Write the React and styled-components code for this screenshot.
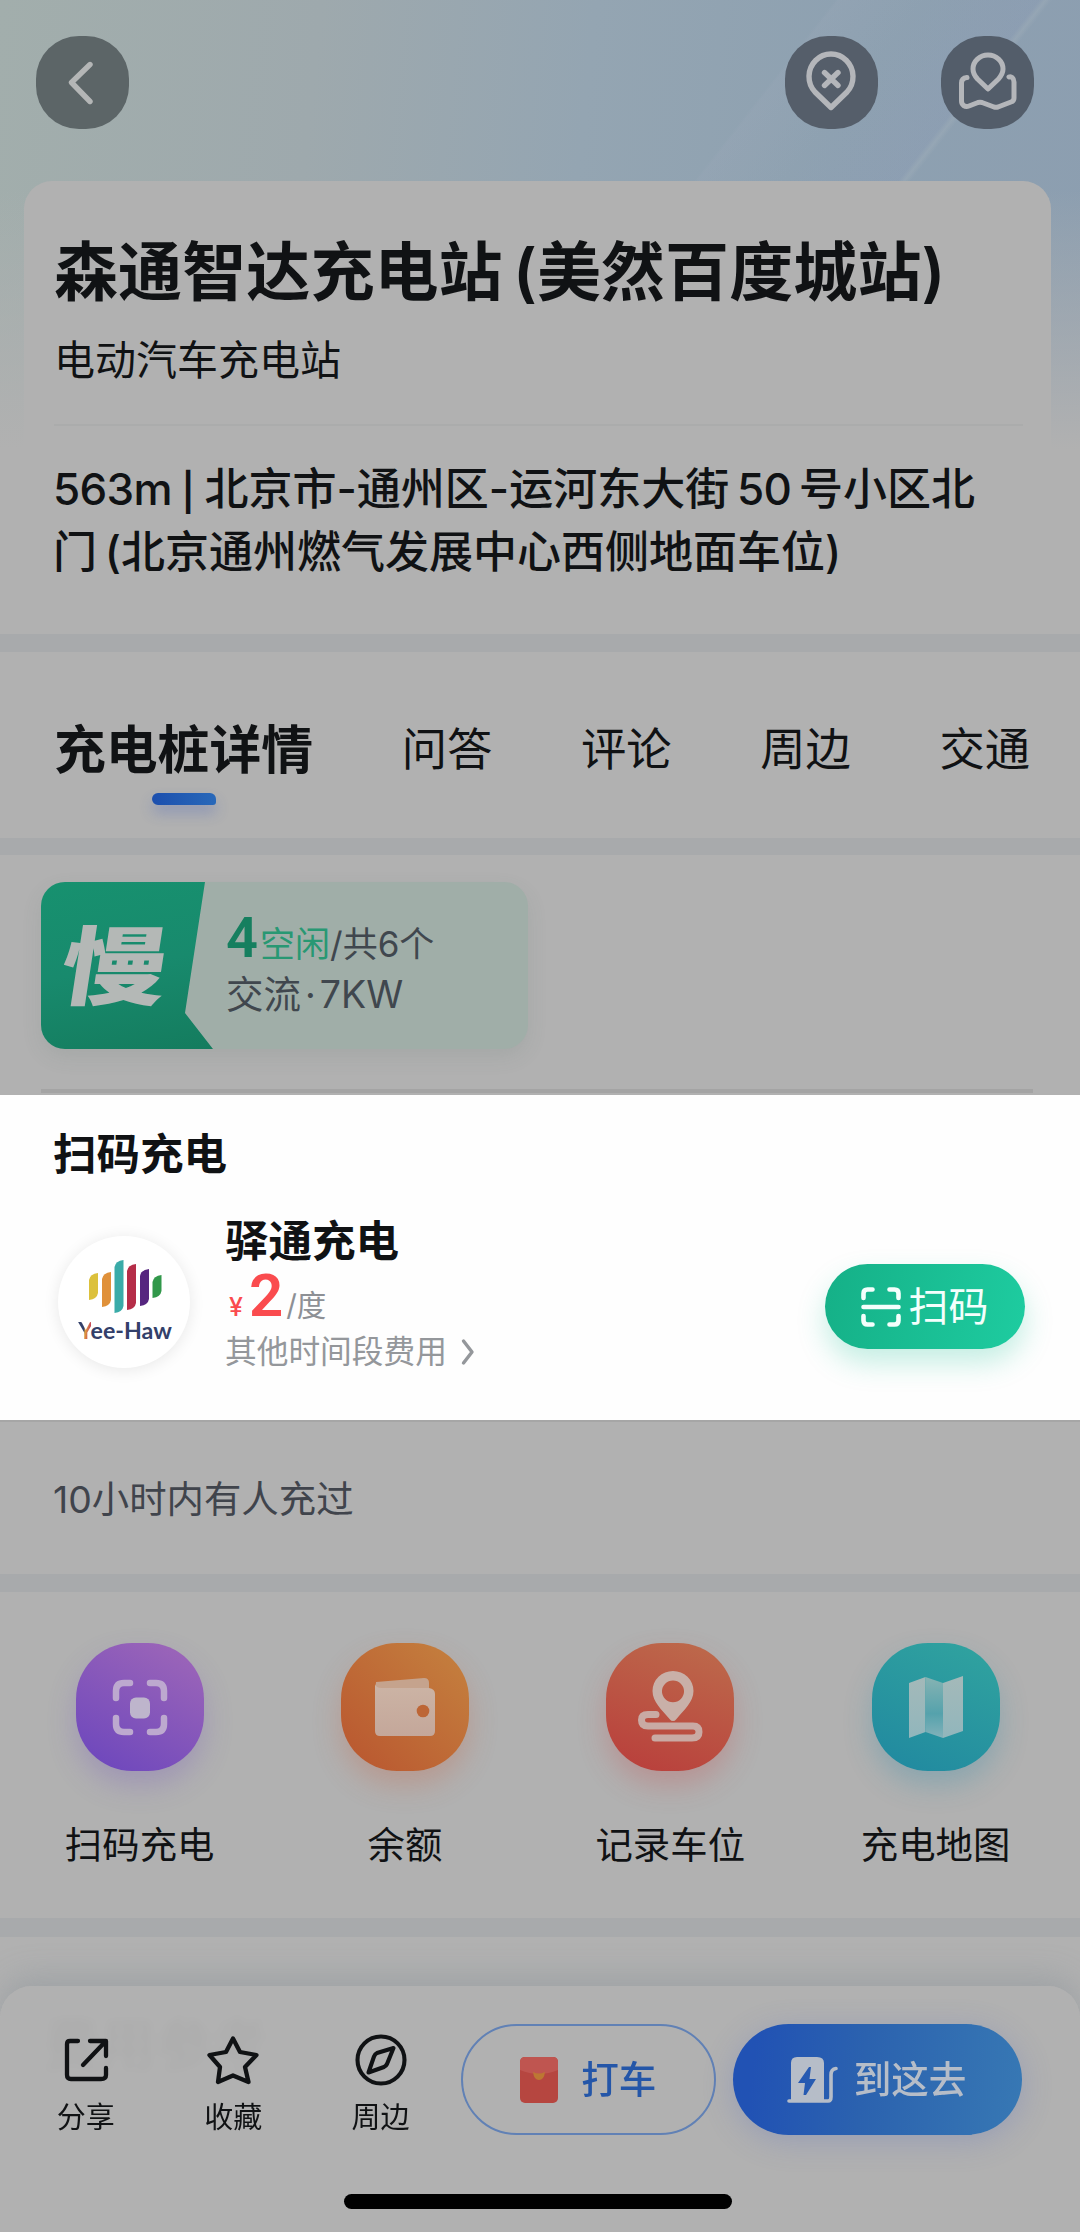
import React from "react";
import styled, { createGlobalStyle } from "styled-components";

const GlobalStyle = createGlobalStyle`
  * { box-sizing: border-box; }
  body {
    margin: 0;
    background: #b1b1b1;
    color: #101214;
    font-family: Inter, "Noto Sans CJK SC", sans-serif;
  }
  svg { display: block; flex: none; }
`;

const Screen = styled.main`
  position: relative;
  width: 1080px;
  height: 2232px;
  overflow: hidden;
  background: #b1b1b1;
`;

const Hero = styled.header`
  height: 634px;
  background:
    linear-gradient(180deg, rgba(177, 177, 177, 0) 0, rgba(177, 177, 177, 0) 190px, #b1b1b1 450px),
    linear-gradient(128deg, transparent 658px, rgba(155, 168, 184, 0.28) 661px, transparent 730px, rgba(138, 150, 188, 0.14) 819px, rgba(165, 178, 188, 0.35) 824px, transparent 829px),
    linear-gradient(96deg, #a2aeac 0%, #9ea9ad 28%, #94a5b2 52%, #8ea1b1 74%, #8c9eb0 100%);
`;

const NavBar = styled.nav`
  display: flex;
  align-items: flex-start;
  height: 181px;
  padding: 36px 46px 0 36px;
`;

const NavButton = styled.button`
  display: grid;
  place-items: center;
  width: 93px;
  height: 93px;
  margin-left: ${(p) => p.$push || "0"};
  padding: 0;
  border: 0;
  border-radius: 43px;
  background: ${(p) => p.$tone};
`;

const StationCard = styled.section`
  margin: 0 29px 0 24px;
  padding: 51px 28px 0 30px;
  border-radius: 28px 28px 0 0;
  background: #b1b1b1;
`;

const StationName = styled.h1`
  margin: 0;
  font-size: 64px;
  font-weight: 600;
  line-height: 80px;
  letter-spacing: 0.1px;
  word-spacing: -6px;
  white-space: nowrap;
`;

const StationType = styled.p`
  margin: 23px 0 39px;
  font-size: 41px;
  line-height: 50px;
`;

const HeroRule = styled.hr`
  height: 2px;
  margin: 0;
  border: 0;
  background: #abacac;
`;

const Address = styled.p`
  margin: 33px 0 0 -1px;
  font-size: 44px;
  font-weight: 500;
  line-height: 61px;
  word-spacing: -4px;
  white-space: nowrap;
`;

const AddressNumber = styled.span`
  font-weight: 550;
  letter-spacing: -0.7px;
`;

const AddressDivider = styled.span`
  margin: 0 2px;
  font-size: 37px;
  font-weight: 600;
`;

const Band = styled.div`
  height: ${(p) => p.$h || 18}px;
  background: #a8aaac;
`;

const Tabs = styled.nav`
  display: flex;
  align-items: flex-start;
  justify-content: space-between;
  height: 186px;
  padding: 67px 50px 0 54px;
`;

const Tab = styled.a`
  display: flex;
  flex-direction: column;
  align-items: center;
  font-size: ${(p) => (p.$active ? 51.8 : 45.3)}px;
  font-weight: ${(p) => (p.$active ? 600 : 400)};
  line-height: 62px;
  &::after {
    content: "";
    display: ${(p) => (p.$active ? "block" : "none")};
    width: 64px;
    height: 12px;
    margin-top: 12px;
    border-radius: 6px 6px 3px 6px;
    background: linear-gradient(90deg, #1c4fae, #2868b9);
    box-shadow: 0 8px 14px rgba(60, 90, 190, 0.3);
  }
`;

const PileSection = styled.section`
  display: flex;
  flex-direction: column;
  height: 240px;
  padding: 27px 47px 0 41px;
`;

const PileCard = styled.div`
  display: flex;
  width: 487px;
  height: 167px;
  border-radius: 24px;
  background: #a0aea8;
  box-shadow: 0 8px 20px rgba(80, 110, 100, 0.12);
`;

const SpeedBadge = styled.div`
  display: grid;
  place-items: center;
  width: 172px;
  height: 167px;
  padding-right: 22px;
  border-radius: 24px 0 0 24px;
  background: linear-gradient(170deg, #17916f 0%, #188a6d 50%, #147c5e 100%);
  clip-path: polygon(0 0, 164px 0, 144px 131px, 172px 100%, 0 100%);
`;

const SpeedText = styled.span`
  color: #b4b8b6;
  font-family: "Noto Sans CJK SC", sans-serif;
  font-size: 92px;
  font-weight: 900;
  line-height: 92px;
  transform: translateY(-5px) scale(1.15, 0.93) skewX(-7deg);
`;

const PileInfo = styled.div`
  display: flex;
  flex-direction: column;
  padding: 28px 0 0 13px;
  color: #40474e;
  white-space: nowrap;
`;

const PileCount = styled.div`
  height: 60px;
  font-size: 35px;
  line-height: 56px;
`;

const FreeNumber = styled.span`
  margin-right: 2px;
  color: #167f5f;
  font-family: Roboto, sans-serif;
  font-size: 56px;
  font-weight: 600;
  line-height: 56px;
`;

const FreeLabel = styled.span`
  color: #289873;
`;

const PileSpec = styled.div`
  font-size: 37.5px;
  line-height: 50px;
`;

const SpecDot = styled.span`
  margin: 0 4px;
`;

const PileRule = styled.hr`
  width: 992px;
  height: 4px;
  margin: 40px 0 0;
  border: 0;
  background: #a4a4a4;
`;

const ScanSection = styled.section`
  height: 325px;
  padding: 28px 55px 0 55px;
  background: #fefefe;
`;

const ScanTitle = styled.h2`
  margin: 0 0 0 -2px;
  font-size: 43.5px;
  font-weight: 600;
  line-height: 62px;
`;

const Provider = styled.div`
  display: flex;
  align-items: flex-start;
  padding-top: 28px;
`;

const ProviderLogo = styled.div`
  display: flex;
  flex-direction: column;
  align-items: center;
  width: 132px;
  height: 132px;
  margin: 23px 35px 0 3px;
  padding: 24px 0 0 2px;
  border-radius: 50%;
  background: #fff;
  box-shadow: 0 2px 16px rgba(0, 0, 0, 0.09);
`;

const LogoWord = styled.span`
  margin-top: 3px;
  color: #33406a;
  font-family: Lato, sans-serif;
  font-size: 23.2px;
  font-weight: 700;
  line-height: 28px;
  white-space: nowrap;
`;

const LogoInitial = styled.span`
  background: linear-gradient(100deg, #33406a 45%, #e0a03a 55%, #c8485a 80%);
  background-clip: text;
  color: transparent;
`;

const ProviderInfo = styled.div`
  display: flex;
  flex: 1;
  flex-direction: column;
`;

const ProviderName = styled.h3`
  margin: 0;
  font-size: 43.5px;
  font-weight: 600;
  line-height: 56px;
`;

const Price = styled.div`
  display: flex;
  align-items: baseline;
  height: 60px;
  padding-left: 4px;
  color: #fa4b4e;
  line-height: 54px;
`;

const Yen = styled.span`
  font-size: 25px;
  font-weight: 500;
`;

const Amount = styled.span`
  margin: 0 3px 0 6px;
  font-family: Roboto, sans-serif;
  font-size: 60px;
  font-weight: 600;
`;

const Unit = styled.span`
  color: #8d9095;
  font-size: 29.5px;
`;

const OtherFees = styled.a`
  display: flex;
  align-items: center;
  gap: 14px;
  height: 46px;
  color: #94979b;
  font-size: 31.7px;
  line-height: 46px;
`;

const ScanButton = styled.button`
  display: flex;
  align-items: center;
  justify-content: center;
  gap: 8px;
  width: 200px;
  height: 85px;
  margin-top: 51px;
  padding: 0 1px 0 0;
  border: 0;
  border-radius: 43px;
  background: linear-gradient(100deg, #15b087, #1ecca0);
  box-shadow: 0 14px 28px rgba(30, 195, 150, 0.26);
  color: #f4fffc;
  font: 400 40px/50px Inter, "Noto Sans CJK SC", sans-serif;
`;

const Recent = styled.p`
  height: 154px;
  margin: 0;
  padding: 53px 53px 0;
  border-top: 2px solid #a6a6a6;
  color: #40444c;
  font-size: 37.4px;
  line-height: 50px;
`;

const Shortcuts = styled.section`
  display: grid;
  grid-template-columns: repeat(4, 265.3px);
  height: 326px;
  padding: 51px 0 0 7px;
`;

const Shortcut = styled.a`
  display: flex;
  flex-direction: column;
  align-items: center;
  gap: 49px;
  font-size: 37.4px;
  line-height: 52px;
`;

const ShortcutIcon = styled.span`
  display: grid;
  place-items: center;
  width: 128px;
  height: 128px;
  border-radius: 56px;
  background: linear-gradient(${(p) => p.$angle || 210}deg, ${(p) => p.$from}, ${(p) => p.$to});
  box-shadow: 0 14px 28px ${(p) => p.$glow};
`;

const NextSection = styled.section`
  padding: 68px 44px 0;
`;

const NextTitle = styled.h2`
  margin: 0;
  font-size: 56px;
  font-weight: 700;
  line-height: 80px;
`;

const BottomBar = styled.footer`
  position: absolute;
  right: 0;
  bottom: 0;
  left: 0;
  display: flex;
  flex-direction: column;
  align-items: center;
  height: 246px;
  padding-right: 4px;
  border-radius: 32px 32px 0 0;
  background: rgba(177, 177, 177, 0.975);
  backdrop-filter: blur(4px);
  box-shadow: 0 -10px 30px rgba(130, 140, 146, 0.38);
`;

const Actions = styled.div`
  display: flex;
  align-items: flex-start;
  width: 100%;
  height: 208px;
  padding: 38px 54px 0 12px;
`;

const Action = styled.a`
  display: flex;
  flex-direction: column;
  align-items: center;
  gap: 12px;
  width: 147.5px;
  padding-top: 10px;
  font-size: 29px;
  line-height: 40px;
`;

const CtaButton = styled.button`
  display: flex;
  align-items: center;
  justify-content: center;
  gap: ${(p) => p.$gap}px;
  width: ${(p) => p.$w}px;
  height: 111px;
  margin-left: ${(p) => p.$ml}px;
  padding: 0 2px 0 0;
  border: ${(p) => (p.$solid ? "0" : "2.5px solid #6181b5")};
  border-radius: 56px;
  background: ${(p) => (p.$solid ? "linear-gradient(95deg, #2152b4 8%, #2b62af 45%, #3778b4 100%)" : "transparent")};
  box-shadow: ${(p) => (p.$solid ? "0 6px 30px rgba(90, 110, 190, 0.3)" : "none")};
  color: ${(p) => (p.$solid ? "#b6bdc8" : "#2456a8")};
  font: 500 37.6px/50px Inter, "Noto Sans CJK SC", sans-serif;
`;

const HomeIndicator = styled.div`
  width: 388px;
  height: 15px;
  border-radius: 8px;
  background: #000;
`;

const stroke = { fill: "none", strokeLinecap: "round", strokeLinejoin: "round" };

const BackIcon = () => (
  <svg width="93" height="93" viewBox="0 0 93 93" {...stroke} stroke="#b4b6b6" strokeWidth="5.400">
    <path d="M54 28.500 L35.500 46.500 L54 65.500" />
  </svg>
);

const PinCloseIcon = () => (
  <svg width="93" height="93" viewBox="0 0 93 93" {...stroke} stroke="#b4b6ba" strokeWidth="5.400">
    <path d="M46 71.500 L30 56 A22 22.500 0 1 1 62 56 Z" />
    <path d="M39.500 36.500 L53 49.500 M53 36.500 L39.500 49.500" />
  </svg>
);

const MapPinIcon = () => (
  <svg width="93" height="93" viewBox="0 0 93 93" {...stroke} stroke="#b4b6ba" strokeWidth="5">
    <path d="M47 53 L36.500 43 C32 38 32 34 32 33 A15 14 0 0 1 62 33 C62 37 60 40 57.500 43 Z" />
    <path d="M26 41.500 C22 42 20.500 44 20.500 47 V65 C20.500 69 24 71.500 28 70 L37 66.500 Q39 66 41 66.500 L53 71 Q55 71.500 57 71 L70 66 Q73 65 73 62 V46 C73 42 70 40 68 41" />
  </svg>
);

const barData = [
  [0, 13, 27, "#dcc13c"],
  [13, 12, 35, "#e0913a"],
  [25.500, 0, 53, "#3aaba8"],
  [38, 4, 46, "#b52d48"],
  [51, 9, 37, "#56267f"],
  [63.500, 15, 23, "#31984a"],
];

const YeeHawBars = () => (
  <svg width="73" height="53" viewBox="0 0 73 53">
    {barData.map(([x, y, h, fill]) => (
      <path
        key={fill}
        fill={fill}
        d={`M${x} ${y + 7} Q${x + 1} ${y + 1} ${x + 9} ${y} V${y + h - 7} Q${x + 8} ${y + h - 1} ${x} ${y + h} Z`}
      />
    ))}
  </svg>
);

const ChevronIcon = () => (
  <svg width="14" height="28" viewBox="0 0 14 28" {...stroke} stroke="#94979b" strokeWidth="3.400">
    <path d="M2.500 3 L11 14 L2.500 25" />
  </svg>
);

const ScanIcon = () => (
  <svg width="40" height="40" viewBox="0 0 40 40" {...stroke} stroke="#f4fffc" strokeWidth="4.600">
    <path d="M2.500 11 V6.500 Q2.500 2.500 6.500 2.500 H11.500 M28.500 2.500 H33.500 Q37.500 2.500 37.500 6.500 V11 M37.500 29 V33.500 Q37.500 37.500 33.500 37.500 H28.500 M11.500 37.500 H6.500 Q2.500 37.500 2.500 33.500 V29 M2.500 20 H37.500" />
  </svg>
);

const FocusIcon = () => (
  <svg width="58" height="58" viewBox="0 0 58 58" {...stroke} stroke="#bda9cf" strokeWidth="6.500">
    <path d="M5 20 V13 Q5 5 13 5 H19 M39 5 H45 Q53 5 53 13 V20 M53 40 V46 Q53 54 45 54 H39 M19 54 H13 Q5 54 5 46 V40" />
    <rect x="19" y="19.500" width="20" height="21" rx="6" fill="#beb5cc" stroke="none" />
  </svg>
);

const WalletIcon = () => (
  <svg width="62" height="60" viewBox="0 0 62 60">
    <defs>
      <linearGradient id="walletFill" x1="0" y1="0" x2="0" y2="1">
        <stop offset="0" stopColor="#ccb4a5" />
        <stop offset="1" stopColor="#c4a79a" />
      </linearGradient>
    </defs>
    <path fill="#c5a38d" d="M2 5 L50 1 Q55 1 55 6 V16 H2 Z" />
    <path fill="url(#walletFill)" d="M1 6 Q1 11 8 11 H55 Q61 12 61 17 V54 Q61 59 56 59 H6 Q1 59 1 54 Z" />
    <circle cx="49" cy="34" r="6.300" fill="#bd6636" />
  </svg>
);

const RouteIcon = () => (
  <svg width="66" height="72" viewBox="0 0 66 72">
    <path fill="#c9b0a8" fillRule="evenodd" d="M36 50 Q34 50 33 48.500 C25 39 15.500 31 15.500 20 A20.500 20 0 0 1 56.500 20 C56.500 31 47 39 39 48.500 Q38 50 36 50 Z M36 9.500 A11 10.800 0 1 0 36 31.200 A11 10.800 0 1 0 36 9.500 Z" />
    <path {...stroke} stroke="#c9aaa4" strokeWidth="7" d="M19 43.500 H11 Q4.500 43.500 4.500 49 Q4.500 55 11 55 H56 Q62 55 62 61 Q62 67 55 67 H18" />
  </svg>
);

const FoldedMapIcon = () => (
  <svg width="54" height="62" viewBox="0 0 54 62">
    <defs>
      <linearGradient id="mapFold" x1="0" y1="0" x2="0" y2="1">
        <stop offset="0" stopColor="#86b3b3" />
        <stop offset=".6" stopColor="#55a2ac" />
        <stop offset="1" stopColor="#83b2ba" />
      </linearGradient>
      <linearGradient id="mapLeaf" x1="0" y1="0" x2="0" y2="1">
        <stop offset="0" stopColor="#a4b9b9" />
        <stop offset="1" stopColor="#91b6bc" />
      </linearGradient>
    </defs>
    <path fill="url(#mapLeaf)" d="M0 7 L16.500 1 V56 L0 62 Z M34 7 L54 0 V55 L34 62 Z" />
    <path fill="url(#mapFold)" d="M16.500 1 L34 7 V62 L16.500 56 Z" />
  </svg>
);

const ShareIcon = () => (
  <svg width="52" height="52" viewBox="0 0 52 52" {...stroke} stroke="#101214" strokeWidth="4.300">
    <path d="M18 7 H10 Q7 7 7 10 V41 Q7 45 11 45 H41 Q46 45 46 41 V34 M30 7 H46 V22 M45 8 L23 31" />
  </svg>
);

const StarIcon = () => (
  <svg width="52" height="52" viewBox="0 0 52 52" {...stroke} stroke="#101214" strokeWidth="4.300">
    <path d="M26 4.500 L33 18 L49.500 21 L38 33 L41.500 48 L26 41.500 L11 48 L13 33 L2.500 21 L19 18 Z" />
  </svg>
);

const CompassIcon = () => (
  <svg width="52" height="52" viewBox="0 0 52 52" {...stroke} stroke="#101214" strokeWidth="4.100">
    <circle cx="26" cy="26" r="23.500" />
    <path d="M38.500 14 L32 30 Q31 32 29 33 L13.500 38.500 L19 22.500 Q20 20 22 19 Z" />
  </svg>
);

const RedPacketIcon = () => (
  <svg width="40" height="48" viewBox="0 0 40 48">
    <rect x="1" y="1" width="38" height="46" rx="5" fill="#b64640" />
    <path d="M1 6 Q1 1 6 1 H34 Q39 1 39 6 V14 Q20 22 1 14 Z" fill="#bf5550" />
    <path d="M14 16 Q20 19 26 16 Q25 24 20 24 Q15 24 14 16 Z" fill="#bd7733" />
  </svg>
);

const ChargerIcon = () => (
  <svg width="51" height="48" viewBox="0 0 51 48">
    <path fill="#b6bdc8" fillRule="evenodd" d="M4 7 Q4 1 10 1 H30 Q37 1 37 7 V45 H4 Z M22 11 L11 27 H18 L16.500 39 H19 L29 23 H22.500 L24 11 Z" />
    <path {...stroke} stroke="#b6bdc8" strokeWidth="3.600" d="M2 45 H41 Q44 45 44 41 V19 Q44 13 49 12.500" />
  </svg>
);

const tabs = ["充电桩详情", "问答", "评论", "周边", "交通"];

const shortcuts = [
  { label: "扫码充电", Icon: FocusIcon, from: "#a068b8", to: "#6a45bd", glow: "rgba(120,90,190,.3)" },
  { label: "余额", Icon: WalletIcon, from: "#c5823f", to: "#b9552f", glow: "rgba(200,100,70,.3)", angle: 225 },
  { label: "记录车位", Icon: RouteIcon, from: "#bd6c4c", to: "#b93d3b", glow: "rgba(200,80,80,.3)", angle: 200 },
  { label: "充电地图", Icon: FoldedMapIcon, from: "#31a49f", to: "#2088a0", glow: "rgba(50,140,170,.3)", angle: 205 },
];

const actions = [
  { label: "分享", Icon: ShareIcon },
  { label: "收藏", Icon: StarIcon },
  { label: "周边", Icon: CompassIcon },
];

export default function App() {
  return (
    <>
      <GlobalStyle />
      <Screen>
        <Hero>
          <NavBar>
            <NavButton $tone="#5c6567"><BackIcon /></NavButton>
            <NavButton $push="auto" $tone="#555e6a"><PinCloseIcon /></NavButton>
            <NavButton $push="63px" $tone="#535d6a"><MapPinIcon /></NavButton>
          </NavBar>
          <StationCard>
            <StationName>森通智达充电站 (美然百度城站)</StationName>
            <StationType>电动汽车充电站</StationType>
            <HeroRule />
            <Address>
              <AddressNumber>563m</AddressNumber> <AddressDivider>|</AddressDivider> 北京市-通州区-运河东大街 <AddressNumber>50</AddressNumber> 号小区北
              <br />
              门 (北京通州燃气发展中心西侧地面车位)
            </Address>
          </StationCard>
        </Hero>
        <Band />
        <Tabs>
          {tabs.map((label, i) => (
            <Tab key={label} $active={i === 0}>{label}</Tab>
          ))}
        </Tabs>
        <Band $h={17} />
        <PileSection>
          <PileCard>
            <SpeedBadge><SpeedText>慢</SpeedText></SpeedBadge>
            <PileInfo>
              <PileCount>
                <FreeNumber>4</FreeNumber>
                <FreeLabel>空闲</FreeLabel>/共6个
              </PileCount>
              <PileSpec>交流<SpecDot>·</SpecDot>7KW</PileSpec>
            </PileInfo>
          </PileCard>
          <PileRule />
        </PileSection>
        <ScanSection>
          <ScanTitle>扫码充电</ScanTitle>
          <Provider>
            <ProviderLogo>
              <YeeHawBars />
              <LogoWord><LogoInitial>Y</LogoInitial>ee-Haw</LogoWord>
            </ProviderLogo>
            <ProviderInfo>
              <ProviderName>驿通充电</ProviderName>
              <Price>
                <Yen>¥</Yen>
                <Amount>2</Amount>
                <Unit>/度</Unit>
              </Price>
              <OtherFees>其他时间段费用<ChevronIcon /></OtherFees>
            </ProviderInfo>
            <ScanButton><ScanIcon />扫码</ScanButton>
          </Provider>
        </ScanSection>
        <Recent>10小时内有人充过</Recent>
        <Band />
        <Shortcuts>
          {shortcuts.map(({ label, Icon, from, to, glow, angle }) => (
            <Shortcut key={label}>
              <ShortcutIcon $from={from} $to={to} $glow={glow} $angle={angle}><Icon /></ShortcutIcon>
              {label}
            </Shortcut>
          ))}
        </Shortcuts>
        <Band $h={19} />
        <NextSection>
          <NextTitle>费用参考</NextTitle>
        </NextSection>
        <BottomBar>
          <Actions>
            {actions.map(({ label, Icon }) => (
              <Action key={label}><Icon />{label}</Action>
            ))}
            <CtaButton $w={255} $ml={7} $gap={22}><RedPacketIcon />打车</CtaButton>
            <CtaButton $solid $w={289} $ml={17} $gap={16}><ChargerIcon />到这去</CtaButton>
          </Actions>
          <HomeIndicator />
        </BottomBar>
      </Screen>
    </>
  );
}
